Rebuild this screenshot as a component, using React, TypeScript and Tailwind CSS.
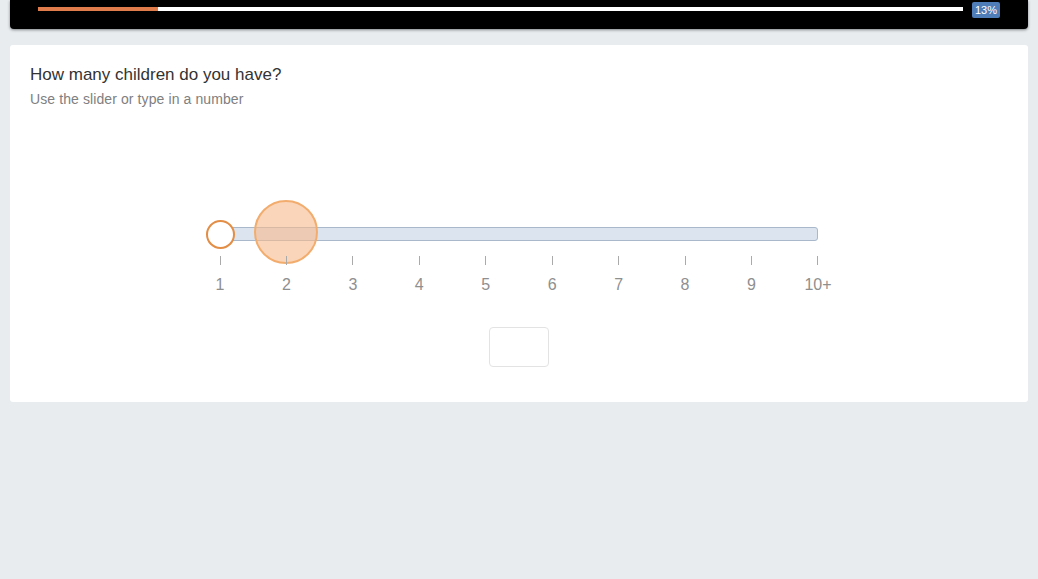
const ticks = ['1', '2', '3', '4', '5', '6', '7', '8', '9', '10+'];

export default function App() {
  return (
    <div
      className="min-h-[579px] w-full bg-[#e8ecef] px-[10px]"
      style={{ fontFamily: '"Liberation Sans", Arial, sans-serif' }}
    >
      {/* Progress header */}
      <div className="flex h-[29px] items-start rounded-b-[4px] bg-black pl-[28px] pr-[28px] pt-[2px] shadow-[0_1px_3px_rgba(0,0,0,0.45)]">
        <div className="mt-[5px] flex h-[4px] flex-1 bg-white">
          <div className="h-full w-[13%] bg-[#e07c4c]" />
        </div>
        <div className="ml-[9px] flex h-[16px] w-[28px] items-center justify-center rounded-[2px] bg-[#4f7db8] text-[11px] leading-none text-white">
          13%
        </div>
      </div>

      {/* Question card */}
      <div className="mt-[16px] h-[357px] rounded-[3px] bg-white px-[20px] pt-[20px]">
        <h2 className="text-[17px] leading-[20px] text-[#333]">How many children do you have?</h2>
        <p className="mt-[5px] text-[14px] leading-[18px] tracking-[0.1px] text-[#808080]">Use the slider or type in a number</p>

        <div className="mt-[119px] flex justify-center">
          <div className="relative w-[598px]">
            {/* track */}
            <div className="h-[14px] w-full rounded-[3px] border border-[#a9b8ca] bg-[#dbe4ef]" />
            {/* active handle */}
            <div className="absolute left-[-14px] top-[-7px] h-[29px] w-[29px] rounded-full border-2 border-[#e38d45] bg-white" />
            {/* hover marker */}
            <div className="absolute left-[34px] top-[-27px] h-[64px] w-[64px] rounded-full border-2 border-[#f2ad6e] bg-[#f9b98a]/60" />
            {/* ticks */}
            <div className="mt-[15px] flex justify-between">
              {ticks.map((t) => (
                <div key={t} className="relative flex w-0 flex-col items-center">
                  <div className="h-[9px] w-px bg-[#aaa]" />
                  <span className="mt-[12px] whitespace-nowrap text-[16px] leading-[16px] text-[#8f8f8f]">{t}</span>
                </div>
              ))}
            </div>
          </div>
        </div>

        <div className="mt-[34px] flex justify-center">
          <input
            type="text"
            className="h-[40px] w-[60px] rounded-[4px] border border-[#e3e3e3] text-center outline-none"
          />
        </div>
      </div>
    </div>
  );
}
